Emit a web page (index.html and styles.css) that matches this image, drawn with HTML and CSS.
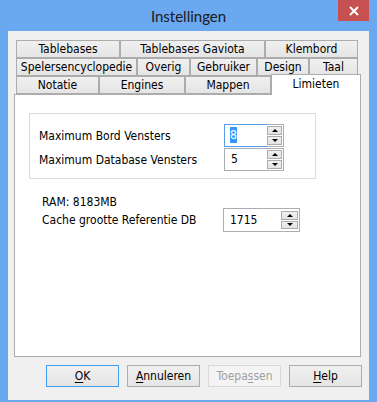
FILE: index.html
```html
<!DOCTYPE html>
<html>
<head>
<meta charset="utf-8">
<link rel="stylesheet" href="styles.css">
</head>
<body>
<div class="window">
  <div class="titlebar">
    <span class="title">Instellingen</span>
    <div class="close"><svg width="10" height="10" viewBox="0 0 10 10"><path d="M1 1L9 9M9 1L1 9" stroke="#fff" stroke-width="2"/></svg></div>
  </div>
  <div class="client">
    <div class="tabs">
      <div class="tabrow">
        <div class="tab w104">Tablebases</div>
        <div class="tab w145">Tablebases Gaviota</div>
        <div class="tab w93">Klembord</div>
      </div>
      <div class="tabrow">
        <div class="tab w121">Spelersencyclopedie</div>
        <div class="tab w53">Overig</div>
        <div class="tab w67">Gebruiker</div>
        <div class="tab w52">Design</div>
        <div class="tab w49">Taal</div>
      </div>
      <div class="tabrow">
        <div class="tab w83">Notatie</div>
        <div class="tab w86">Engines</div>
        <div class="tab w86">Mappen</div>
        <div class="tab selected">Limieten</div>
      </div>
    </div>
    <div class="panel">
      <div class="group">
        <div class="grid">
          <span class="label">Maximum Bord Vensters</span>
          <div class="spin">
            <div class="edit focus"><span class="sel">8</span></div>
            <div class="ud"><div class="btn up"></div><div class="btn down"></div></div>
          </div>
          <span class="label">Maximum Database Vensters</span>
          <div class="spin">
            <div class="edit">5</div>
            <div class="ud"><div class="btn up"></div><div class="btn down"></div></div>
          </div>
        </div>
      </div>
      <div class="section">
        <div class="ram">RAM: 8183MB</div>
        <div class="grid2">
          <span class="label">Cache grootte Referentie DB</span>
          <div class="spin wide">
            <div class="edit">1715</div>
            <div class="ud"><div class="btn up"></div><div class="btn down"></div></div>
          </div>
        </div>
      </div>
    </div>
    <div class="buttons">
      <div class="button default"><u>O</u>K</div>
      <div class="button"><u>A</u>nnuleren</div>
      <div class="button disabled">Toepa<u>s</u>sen</div>
      <div class="button"><u>H</u>elp</div>
    </div>
  </div>
</div>
</body>
</html>
```
FILE: styles.css
```css
html, body {
  margin: 0;
  padding: 0;
}
body {
  width: 377px;
  height: 402px;
  overflow: hidden;
  background: #6aa8f0;
  font-family: "DejaVu Sans Condensed", "DejaVu Sans", sans-serif;
  font-size: 12px;
  color: #000;
}
.window {
  display: flex;
  flex-direction: column;
}
.titlebar {
  height: 31px;
  position: relative;
  display: flex;
  justify-content: center;
  align-items: center;
}
.title {
  font-family: Lato, "Noto Sans", sans-serif;
  font-size: 15px;
  color: #1a1a1a;
  margin-top: 0;
}
.close {
  position: absolute;
  top: 0;
  right: 8px;
  width: 31px;
  height: 21px;
  background: #c75050;
  display: flex;
  align-items: center;
  justify-content: center;
}
.client {
  margin: 0 8px;
  height: 369px;
  background: #f0f0f0;
  box-sizing: border-box;
  padding: 9px 0 0 6px;
}
.tabs {
  margin-left: 2px;
  display: flex;
  flex-direction: column;
}
.tabrow {
  display: flex;
  height: 18px;
  align-items: flex-start;
}
.tab {
  box-sizing: border-box;
  height: 18px;
  border: 1px solid #acacac;
  background: linear-gradient(#f0f0f0, #e5e5e5);
  display: flex;
  align-items: center;
  justify-content: center;
  white-space: nowrap;
  padding-bottom: 1px;
}
.w104 { width: 104px; }
.w145 { width: 145px; }
.w93 { width: 93px; }
.w121 { width: 121px; }
.w53 { width: 53px; }
.w67 { width: 67px; }
.w52 { width: 52px; }
.w49 { width: 49px; }
.w83 { width: 83px; }
.w86 { width: 86px; }
.tab.selected {
  width: 90px;
  height: 21px;
  margin-top: -2px;
  background: #fff;
  border-bottom: none;
  position: relative;
  z-index: 1;
  align-items: flex-start;
  padding-top: 2px;
}
.panel {
  box-sizing: border-box;
  width: 347px;
  height: 263px;
  border: 1px solid #acacac;
  background: #fff;
  padding: 18px 0 0 14px;
}
.group {
  box-sizing: border-box;
  width: 287px;
  height: 66px;
  border: 1px solid #dcdcdc;
  padding: 10px 0 0 9px;
}
.grid {
  display: grid;
  grid-template-columns: 185px 60px;
  grid-auto-rows: 23px;
  row-gap: 1px;
  align-items: center;
}
.section {
  padding: 17px 0 0 13px;
}
.ram {
  height: 12px;
  line-height: 12px;
}
.grid2 {
  display: grid;
  grid-template-columns: 181px 77px;
  grid-auto-rows: 24px;
  align-items: center;
}
.spin {
  display: flex;
  height: 23px;
  box-sizing: border-box;
}
.spin.wide { height: 24px; }
.edit {
  flex: 1;
  box-sizing: border-box;
  border: 1px solid #abadb3;
  border-right: none;
  display: flex;
  align-items: center;
  padding-left: 6px;
  padding-bottom: 1px;
}
.edit.focus {
  border-color: #569de5;
  padding-left: 5px;
}
.sel {
  background: #3399ff;
  color: #fff;
  padding: 1px 0;
}
.ud {
  width: 17px;
  box-sizing: border-box;
  border: 1px solid #abadb3;
  border-left: none;
  display: flex;
  flex-direction: column;
  padding: 1px 1px 1px 0;
  gap: 1px;
}
.spin.wide .ud { width: 19px; padding: 2px 1px 2px 0; }
.btn {
  flex: 1;
  box-sizing: border-box;
  border: 1px solid #acacac;
  background: linear-gradient(#f0f0f0, #e3e3e3);
  display: flex;
  align-items: center;
  justify-content: center;
}
.btn::before {
  content: "";
  width: 0;
  height: 0;
  border-left: 3px solid transparent;
  border-right: 3px solid transparent;
}
.btn.up::before { border-bottom: 3px solid #000; }
.btn.down::before { border-top: 3px solid #000; }
.buttons {
  display: flex;
  gap: 8px;
  margin: 8px 0 0 32px;
}
.button {
  box-sizing: border-box;
  width: 73px;
  height: 22px;
  border: 1px solid #acacac;
  background: linear-gradient(#f0f0f0, #e5e5e5);
  display: flex;
  align-items: center;
  justify-content: center;
  padding-bottom: 1px;
}
.button.default {
  border-color: #3c9cf8;
}
.button.disabled {
  border-color: #d9d9d9;
  background: #f4f4f4;
  color: #a0a0a0;
}
u {
  text-decoration-thickness: 1px;
  text-underline-offset: 2px;
}
```
